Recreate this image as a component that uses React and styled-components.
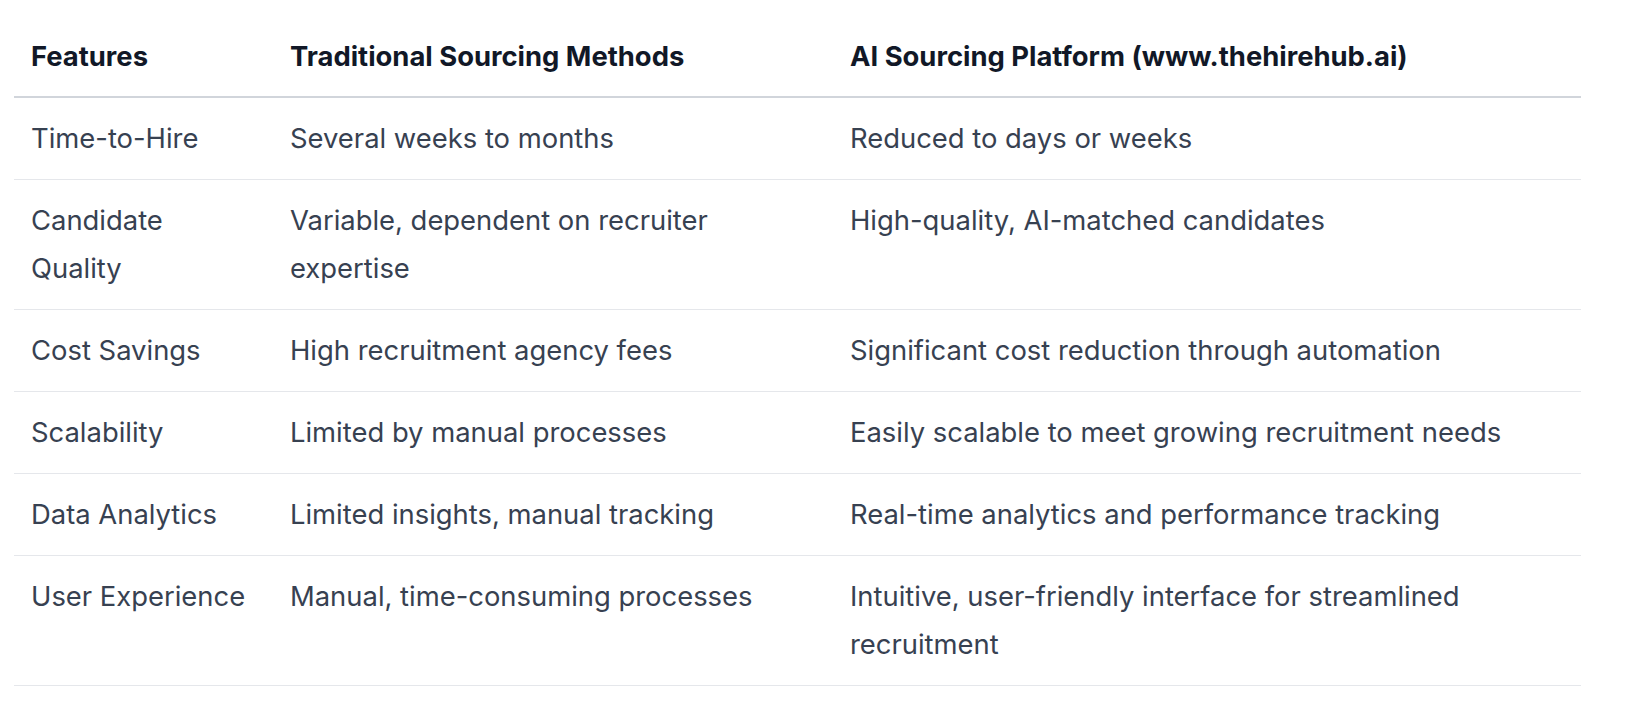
import React from 'react';
import styled, { createGlobalStyle } from 'styled-components';

const GlobalStyle = createGlobalStyle`
  html, body {
    margin: 0;
    padding: 0;
    background: #ffffff;
  }
  body {
    font-family: Inter, "Noto Sans", "Liberation Sans", sans-serif;
    -webkit-font-smoothing: antialiased;
  }
`;

const rows = [
  ['Time-to-Hire', 'Several weeks to months', 'Reduced to days or weeks'],
  ['Candidate Quality', 'Variable, dependent on recruiter expertise', 'High-quality, AI-matched candidates'],
  ['Cost Savings', 'High recruitment agency fees', 'Significant cost reduction through automation'],
  ['Scalability', 'Limited by manual processes', 'Easily scalable to meet growing recruitment needs'],
  ['Data Analytics', 'Limited insights, manual tracking', 'Real-time analytics and performance tracking'],
  ['User Experience', 'Manual, time-consuming processes', 'Intuitive, user-friendly interface for streamlined recruitment'],
];

const App = () => {
  return (
    <>
      <GlobalStyle />
      <Page>
        <Table>
          <colgroup>
            <col style={{ width: '259px' }} />
            <col style={{ width: '560px' }} />
            <col />
          </colgroup>
          <thead>
            <HeadRow>
              <HeadCell>Features</HeadCell>
              <HeadCell>Traditional Sourcing Methods</HeadCell>
              <HeadCell>AI Sourcing Platform (www.thehirehub.ai)</HeadCell>
            </HeadRow>
          </thead>
          <tbody>
            {rows.map((row) => (
              <BodyRow key={row[0]}>
                {row.map((cell, i) => (
                  <Cell key={i}>{cell}</Cell>
                ))}
              </BodyRow>
            ))}
          </tbody>
        </Table>
      </Page>
    </>
  );
};

const Page = styled.div`
  padding: 15px 53px 0 14px;
`;

const Table = styled.table`
  width: 100%;
  table-layout: fixed;
  border-collapse: collapse;
  font-size: 27.4px;
  line-height: 48px;
  text-align: left;
`;

const HeadRow = styled.tr`
  border-bottom: 2px solid #d1d5db;
`;

const HeadCell = styled.th`
  padding: 16.5px 24px 16px 17px;
  font-weight: 700;
  color: #111827;
  vertical-align: bottom;
  white-space: nowrap;
`;

const BodyRow = styled.tr`
  border-bottom: 1px solid #e5e7eb;
`;

const Cell = styled.td`
  padding: 16.5px 24px 16.5px 17px;
  color: #374151;
  vertical-align: top;
`;

export default App;
